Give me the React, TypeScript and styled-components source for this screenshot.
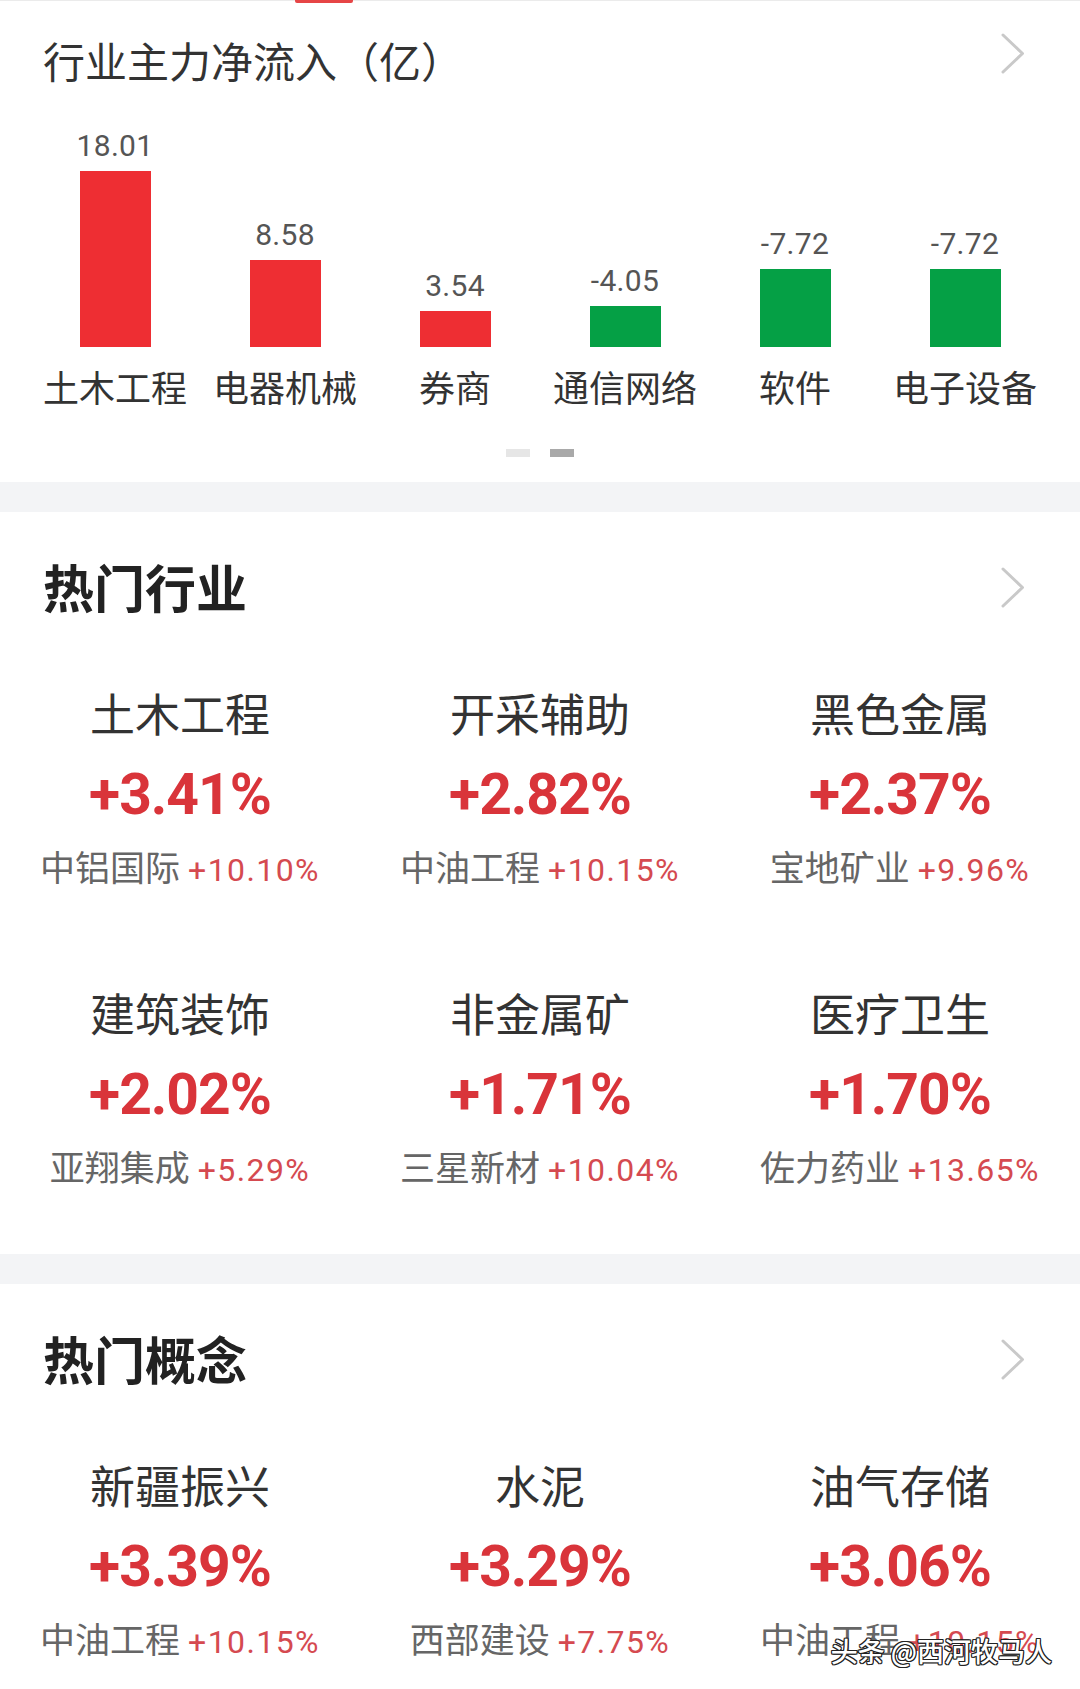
import React from 'react';
import styled, { createGlobalStyle } from 'styled-components';

const CJK = `"Noto Sans CJK SC", "Noto Sans", sans-serif`;
const NUM = `Roboto, "Liberation Sans", "Noto Sans CJK SC", sans-serif`;

const GlobalStyle = createGlobalStyle`
  html, body { margin: 0; padding: 0; background: #ffffff; }
  body { width: 1080px; font-family: ${CJK}; -webkit-font-smoothing: antialiased; }
  * { box-sizing: border-box; }
`;

const Page = styled.div`
  position: relative;
  width: 1080px;
  height: 1689px;
  overflow: hidden;
  background: #ffffff;
`;

const TopStrip = styled.div`
  display: flex;
  height: 3px;
  padding-left: 295px;
  border-top: 1px solid #ebebeb;
`;

const TabMark = styled.span`
  width: 58px;
  height: 3px;
  margin-top: -1px;
  background: #e64546;
  border-radius: 0 0 2px 2px;
`;

const Section = styled.section<{ $pt: number; $pb: number }>`
  background: #ffffff;
  padding: ${(p) => p.$pt}px 0 ${(p) => p.$pb}px;
`;

const Band = styled.div`
  height: 30px;
  background: #f3f4f6;
`;

const Header = styled.div<{ $mt?: number }>`
  display: flex;
  justify-content: space-between;
  align-items: flex-start;
  padding: 0 55px 0 43px;
  margin-top: ${(p) => p.$mt ?? 0}px;
`;

const ChartTitle = styled.h2`
  margin: 0;
  font: 400 42px/1 ${CJK};
  color: #333333;
  white-space: nowrap;
`;

const SectionTitle = styled.h2`
  margin: 0;
  font: 700 51px/1 ${CJK};
  color: #222222;
  white-space: nowrap;
`;

const ChevronBox = styled.span<{ $offset: number }>`
  display: block;
  width: 24px;
  height: 41px;
  margin-top: ${(p) => p.$offset}px;
`;

const Chevron = ({ offset }: { offset: number }) => (
  <ChevronBox $offset={offset}>
    <svg width="24" height="41" viewBox="0 0 24 41">
      <polyline
        points="2,2 21.5,20.5 2,39"
        fill="none"
        stroke="#c9c9c9"
        strokeWidth="3"
        strokeLinecap="round"
        strokeLinejoin="round"
      />
    </svg>
  </ChevronBox>
);

const Chart = styled.div`
  display: grid;
  grid-template-columns: repeat(6, 170px);
  padding: 0 30px;
  margin-top: 50px;
  align-items: end;
`;

const ChartCol = styled.div`
  display: flex;
  flex-direction: column;
  align-items: center;
`;

const BarValue = styled.div`
  font: 400 30px/1 ${NUM};
  color: #555555;
  margin-bottom: 10px;
  letter-spacing: 0.3px;
`;

const Bar = styled.div<{ $up: boolean }>`
  width: 71px;
  background: ${(p) => (p.$up ? '#ee2e33' : '#05a045')};
`;

const BarLabel = styled.div`
  margin-top: 21px;
  font: 400 36px/1 ${CJK};
  color: #333333;
  white-space: nowrap;
`;

const Dots = styled.div`
  display: flex;
  justify-content: center;
  gap: 20px;
  margin-top: 45px;
`;

const Dot = styled.span<{ $active?: boolean }>`
  width: 24px;
  height: 8px;
  background: ${(p) => (p.$active ? '#a9a9a9' : '#e6e6e6')};
`;

const Grid = styled.div`
  display: grid;
  grid-template-columns: repeat(3, 1fr);
  row-gap: 104px;
  margin-top: 78px;
`;

const Item = styled.div`
  display: flex;
  flex-direction: column;
  align-items: center;
`;

const ItemName = styled.div`
  font: 400 45px/1 ${CJK};
  color: #333333;
  white-space: nowrap;
`;

const ItemPct = styled.div`
  margin-top: 31px;
  font: 700 57px/1 ${NUM};
  color: #d9343a;
  letter-spacing: -1px;
`;

const ItemSub = styled.div`
  margin-top: 25px;
  display: flex;
  align-items: baseline;
  font: 400 35px/1 ${CJK};
  color: #666666;
  white-space: nowrap;
`;

const SubPct = styled.span`
  margin-left: 8px;
  font: 400 32px/1 ${NUM};
  color: #d54a50;
  letter-spacing: 1.4px;
`;

const Watermark = styled.div`
  position: absolute;
  right: 28px;
  bottom: 25px;
  font: 500 27px/1 ${CJK};
  color: #ffffff;
  text-shadow: -1px -1px 0 #222, 1px -1px 0 #222, -1px 1px 0 #222, 1px 1px 0 #222,
    0 1px 0 #222, 0 -1px 0 #222, 1px 0 0 #222, -1px 0 0 #222;
  white-space: nowrap;
`;

type BarData = { label: string; value: string; h: number; up: boolean };
const bars: BarData[] = [
  { label: '土木工程', value: '18.01', h: 176, up: true },
  { label: '电器机械', value: '8.58', h: 87, up: true },
  { label: '券商', value: '3.54', h: 36, up: true },
  { label: '通信网络', value: '-4.05', h: 41, up: false },
  { label: '软件', value: '-7.72', h: 78, up: false },
  { label: '电子设备', value: '-7.72', h: 78, up: false },
];

type ItemData = { name: string; pct: string; stock: string; stockPct: string };
const industries: ItemData[] = [
  { name: '土木工程', pct: '+3.41%', stock: '中铝国际', stockPct: '+10.10%' },
  { name: '开采辅助', pct: '+2.82%', stock: '中油工程', stockPct: '+10.15%' },
  { name: '黑色金属', pct: '+2.37%', stock: '宝地矿业', stockPct: '+9.96%' },
  { name: '建筑装饰', pct: '+2.02%', stock: '亚翔集成', stockPct: '+5.29%' },
  { name: '非金属矿', pct: '+1.71%', stock: '三星新材', stockPct: '+10.04%' },
  { name: '医疗卫生', pct: '+1.70%', stock: '佐力药业', stockPct: '+13.65%' },
];
const concepts: ItemData[] = [
  { name: '新疆振兴', pct: '+3.39%', stock: '中油工程', stockPct: '+10.15%' },
  { name: '水泥', pct: '+3.29%', stock: '西部建设', stockPct: '+7.75%' },
  { name: '油气存储', pct: '+3.06%', stock: '中油工程', stockPct: '+10.15%' },
];

const ItemGrid = ({ items }: { items: ItemData[] }) => (
  <Grid>
    {items.map((it, i) => (
      <Item key={i}>
        <ItemName>{it.name}</ItemName>
        <ItemPct>{it.pct}</ItemPct>
        <ItemSub>
          {it.stock}
          <SubPct>{it.stockPct}</SubPct>
        </ItemSub>
      </Item>
    ))}
  </Grid>
);

export default function App() {
  return (
    <Page>
      <GlobalStyle />
      <Section $pt={0} $pb={25}>
        <TopStrip>
          <TabMark />
        </TopStrip>
        <Header $mt={36}>
          <ChartTitle>行业主力净流入（亿）</ChartTitle>
          <Chevron offset={-6} />
        </Header>
        <Chart>
          {bars.map((b, i) => (
            <ChartCol key={i}>
              <BarValue>{b.value}</BarValue>
              <Bar $up={b.up} style={{ height: b.h }} />
              <BarLabel>{b.label}</BarLabel>
            </ChartCol>
          ))}
        </Chart>
        <Dots>
          <Dot />
          <Dot $active />
        </Dots>
      </Section>
      <Band />
      <Section $pt={49} $pb={68}>
        <Header>
          <SectionTitle>热门行业</SectionTitle>
          <Chevron offset={6} />
        </Header>
        <ItemGrid items={industries} />
      </Section>
      <Band />
      <Section $pt={49} $pb={30}>
        <Header>
          <SectionTitle>热门概念</SectionTitle>
          <Chevron offset={6} />
        </Header>
        <ItemGrid items={concepts} />
      </Section>
      <Watermark>头条 @西河牧马人</Watermark>
    </Page>
  );
}
